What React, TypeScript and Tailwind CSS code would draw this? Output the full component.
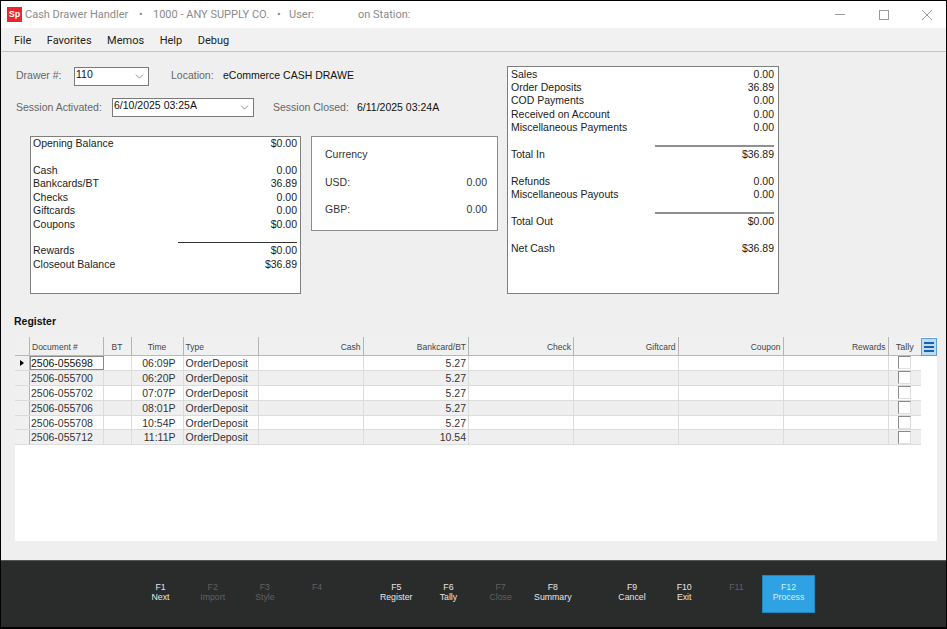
import { ChevronDown } from 'lucide-react'

const DRAWER_ROWS = [
  { label: 'Opening Balance', value: '$0.00' },
  {},
  { label: 'Cash', value: '0.00' },
  { label: 'Bankcards/BT', value: '36.89' },
  { label: 'Checks', value: '0.00' },
  { label: 'Giftcards', value: '0.00' },
  { label: 'Coupons', value: '$0.00' },
  { rule: true },
  { label: 'Rewards', value: '$0.00' },
  { label: 'Closeout Balance', value: '$36.89' },
]

const TOTAL_ROWS = [
  { label: 'Sales', value: '0.00' },
  { label: 'Order Deposits', value: '36.89' },
  { label: 'COD Payments', value: '0.00' },
  { label: 'Received on Account', value: '0.00' },
  { label: 'Miscellaneous Payments', value: '0.00' },
  { rule: true },
  { label: 'Total In', value: '$36.89' },
  {},
  { label: 'Refunds', value: '0.00' },
  { label: 'Miscellaneous Payouts', value: '0.00' },
  { rule: true },
  { label: 'Total Out', value: '$0.00' },
  {},
  { label: 'Net Cash', value: '$36.89' },
]

const COLUMNS = [
  { name: 'Document #', width: 'w-[73.5px]', head: 'text-left', cell: 'text-left pl-[1px]' },
  { name: 'BT', width: 'w-[28px]', head: 'text-center', cell: 'text-left' },
  { name: 'Time', width: 'w-[52px]', head: 'text-center', cell: 'text-right pr-[7px]' },
  { name: 'Type', width: 'w-[75px]', head: 'text-left', cell: 'text-left pl-[2px]' },
  { name: 'Cash', width: 'w-[105px]', head: 'text-right', cell: 'text-right' },
  { name: 'Bankcard/BT', width: 'w-[105.5px]', head: 'text-right', cell: 'text-right pr-[2px]' },
  { name: 'Check', width: 'w-[105px]', head: 'text-right', cell: 'text-right' },
  { name: 'Giftcard', width: 'w-[104.5px]', head: 'text-right', cell: 'text-right' },
  { name: 'Coupon', width: 'w-[105px]', head: 'text-right', cell: 'text-right' },
  { name: 'Rewards', width: 'w-[105px]', head: 'text-right', cell: 'text-right' },
]

const REGISTER = [
  ['2506-055698', '', '06:09P', 'OrderDeposit', '', '5.27'],
  ['2506-055700', '', '06:20P', 'OrderDeposit', '', '5.27'],
  ['2506-055702', '', '07:07P', 'OrderDeposit', '', '5.27'],
  ['2506-055706', '', '08:01P', 'OrderDeposit', '', '5.27'],
  ['2506-055708', '', '10:54P', 'OrderDeposit', '', '5.27'],
  ['2506-055712', '', '11:11P', 'OrderDeposit', '', '10.54'],
]

type FKey = { key: string; label: string; off?: boolean; primary?: boolean }

const KEY_GROUPS: FKey[][] = [
  [
    { key: 'F1', label: 'Next' },
    { key: 'F2', label: 'Import', off: true },
    { key: 'F3', label: 'Style', off: true },
    { key: 'F4', label: '', off: true },
  ],
  [
    { key: 'F5', label: 'Register' },
    { key: 'F6', label: 'Tally' },
    { key: 'F7', label: 'Close', off: true },
    { key: 'F8', label: 'Summary' },
  ],
  [
    { key: 'F9', label: 'Cancel' },
    { key: 'F10', label: 'Exit' },
    { key: 'F11', label: '', off: true },
    { key: 'F12', label: 'Process', primary: true },
  ],
]

type Row = { label?: string; value?: string; rule?: boolean }

function SummaryRows({ rows, ruleClass }: { rows: Row[]; ruleClass: string }) {
  return (
    <>
      {rows.map((row, i) =>
        row.rule ? (
          <div key={i} className="h-[13.4px] flex items-end justify-end pb-[1px]">
            <div className={ruleClass} />
          </div>
        ) : (
          <div key={i} className="h-[13.4px] flex items-center justify-between leading-[13px]">
            <span>{row.label}</span>
            <span>{row.value}</span>
          </div>
        ),
      )}
    </>
  )
}

function Combo({ value, className }: { value: string; className: string }) {
  return (
    <div className={'h-[19px] bg-white border border-[#7a7a7a] flex items-center justify-between pl-[1px] pr-[2px] text-[10.5px] text-[#111] ' + className}>
      <span className="-mt-[3px]">{value}</span>
      <ChevronDown size={13} strokeWidth={1.2} className="text-[#555]" />
    </div>
  )
}

function FunctionKey({ fkey, label, off, primary }: { fkey: string; label: string; off?: boolean; primary?: boolean }) {
  return (
    <div
      className={
        'w-[52.2px] h-[38px] flex flex-col items-center justify-center pb-[4px] text-[8.75px] leading-[10px] ' +
        (primary ? 'bg-[#2ea2e3] border border-[#1f86c4] text-[#d8eefb] ' : '') +
        (off ? 'text-[#5f6161]' : primary ? '' : 'text-[#e6e6e6]')
      }
    >
      <span>{fkey}</span>
      <span className={label ? '' : 'h-[10px]'}>{label}</span>
    </div>
  )
}

export default function App() {
  return (
    <div className="w-[947px] h-[629px] flex flex-col bg-black pt-[1px] pl-[1px] pr-[1px] pb-[2px] overflow-hidden font-['Liberation_Sans',sans-serif]">
      {/* Title bar */}
      <div className="h-[27px] bg-white flex items-center pl-[6px] pr-[14px] pt-[1px] shrink-0 text-[11px] text-[#8a8a8a] font-['Roboto',sans-serif]">
        <div className="w-[15px] h-[15px] -mt-[1px] bg-[#e8262d] text-white text-[9px] font-bold flex items-center justify-center mr-[3px] font-['Liberation_Sans',sans-serif]">
          Sp
        </div>
        <span className="w-[105px] whitespace-nowrap">Cash Drawer Handler</span>
        <span className="ml-[9px] w-[14px]">•</span>
        <span className="w-[115px] whitespace-nowrap">1000 - ANY SUPPLY CO.</span>
        <span className="ml-[9px] w-[12px]">•</span>
        <span className="w-[68px]">User:</span>
        <span className="ml-[1px] whitespace-nowrap">on Station:</span>
        <div className="ml-auto -mt-[1px] flex items-center gap-[33.5px] text-[#9a9a9a]">
          <svg width="10" height="10" viewBox="0 0 10 10" fill="none" stroke="currentColor">
            <path d="M0 4.5h10" />
          </svg>
          <svg width="10" height="10" viewBox="0 0 10 10" fill="none" stroke="currentColor">
            <rect x="0.5" y="0.5" width="9" height="9" />
          </svg>
          <svg width="10" height="10" viewBox="0 0 10 10" fill="none" stroke="currentColor">
            <path d="M0 0l10 10M10 0L0 10" />
          </svg>
        </div>
      </div>

      {/* Menu */}
      <div className="h-[20px] bg-[#f1f1f1] border-b border-[#c4c4c4] box-content flex items-center gap-[15.5px] pl-[13px] pt-[3px] shrink-0 text-[11px] text-[#222] font-['Roboto',sans-serif]">
        <span>File</span>
        <span>Favorites</span>
        <span>Memos</span>
        <span>Help</span>
        <span>Debug</span>
      </div>

      {/* Body */}
      <div className="flex-1 flex flex-col min-h-0 bg-[#efefef] text-[10.5px]">
        <div className="flex h-[256px] pt-[14px] shrink-0">
          <div className="w-[506px] shrink-0">
            <div className="flex items-center h-[19px] mt-[1px] pl-[15px] text-[#666]">
              <span className="w-[58px] -mt-[1px]">Drawer #:</span>
              <Combo value="110" className="w-[75px]" />
              <span className="ml-[22px] w-[52px] -mt-[1px]">Location:</span>
              <span className="text-[#111] whitespace-nowrap -mt-[1px]">eCommerce CASH DRAWE</span>
            </div>
            <div className="flex items-center h-[19px] mt-[12px] pl-[15px] text-[#666]">
              <span className="w-[96px]">Session Activated:</span>
              <Combo value="6/10/2025 03:25A" className="w-[142px]" />
              <span className="ml-[19px] w-[84px]">Session Closed:</span>
              <span className="text-[#111] whitespace-nowrap">6/11/2025 03:24A</span>
            </div>
            <div className="flex items-start gap-[10px] mt-[19px] ml-[29px]">
              <div className="w-[271px] h-[158px] bg-white border border-[#7f7f7f] pl-[2px] pr-[3px] text-[#222]">
                <SummaryRows rows={DRAWER_ROWS} ruleClass="w-[119px] h-[1px] bg-[#333]" />
              </div>
              <div className="w-[187px] h-[95px] bg-white border border-[#8c8c8c] pl-[13px] pr-[10px] text-[#333]">
                <div className="mt-[11px] h-[13px] leading-[13px]">Currency</div>
                <div className="mt-[15px] h-[13px] leading-[13px] flex justify-between">
                  <span>USD:</span>
                  <span>0.00</span>
                </div>
                <div className="mt-[14px] h-[13px] leading-[13px] flex justify-between">
                  <span>GBP:</span>
                  <span>0.00</span>
                </div>
              </div>
            </div>
          </div>
          <div className="w-[272px] h-[228px] bg-white border border-[#7f7f7f] pt-[0.4px] pl-[3px] pr-[4px] text-[#222]">
            <SummaryRows rows={TOTAL_ROWS} ruleClass="w-[119px] h-[2px] bg-[#8f8f8f]" />
          </div>
        </div>

        {/* Register */}
        <div className="pl-[13px] mt-[7px] h-[13px] leading-[13px] font-bold text-[#111] shrink-0">Register</div>
        <div className="mt-[9px] ml-[14px] w-[922px] h-[204px] bg-white shrink-0 flex items-start relative">
          <div className="w-[906px]">
            <div className="flex h-[19px] bg-[#f0f0f0] border-b border-[#b8b8b8] text-[8.5px] text-[#444]">
              <div className="w-[15px] border-r border-[#b5b5b5]" />
              {COLUMNS.map((col) => (
                <div key={col.name} className={'px-[2px] pt-[4px] border-r border-[#b5b5b5] whitespace-nowrap ' + col.width + ' ' + col.head}>
                  {col.name}
                </div>
              ))}
              <div className="flex-1 text-center pt-[4px] text-[9px]">Tally</div>
            </div>
            {REGISTER.map((row, r) => (
              <div key={row[0]} className={'flex h-[14.9px] border-b border-[#dcdcdc] text-[10.5px] leading-[14px] text-[#333] ' + (r % 2 ? 'bg-[#efefef]' : 'bg-white')}>
                <div className="w-[15px] bg-[#f0f0f0] border-r border-[#b5b5b5] flex items-center justify-center">
                  {r === 0 && <div className="w-0 h-0 border-y-[3.5px] border-y-transparent border-l-[4px] border-l-black" />}
                </div>
                {COLUMNS.map((col, c) => (
                  <div
                    key={col.name}
                    className={
                      'border-r border-[#dcdcdc] whitespace-nowrap ' + col.width + ' ' + col.cell +
                      (r === 0 && c === 0 ? ' outline outline-1 -outline-offset-1 outline-[#8a8a8a] text-[#111]' : '')
                    }
                  >
                    {row[c]}
                  </div>
                ))}
                <div className="flex-1 flex justify-center items-center">
                  <div className="w-[13px] h-[13px] bg-white border-t border-l border-[#8a8a8a] border-r border-b border-r-[#dfdfdf] border-b-[#dfdfdf]" />
                </div>
              </div>
            ))}
          </div>
          <div className="w-[16px] h-[18px] mt-[1px] bg-[#bcdcf5] border border-[#5f9fd8] flex flex-col items-center justify-center gap-[2px]">
            <div className="w-[10px] h-[2px] bg-[#1f5fa8]" />
            <div className="w-[10px] h-[2px] bg-[#1f5fa8]" />
            <div className="w-[10px] h-[2px] bg-[#1f5fa8]" />
          </div>
        </div>
      </div>

      {/* Function keys */}
      <div className="h-[67px] shrink-0 bg-[#2a2b2b] border-t border-[#555] flex items-start gap-[27px] pl-[133.4px] pt-[14px]">
        {KEY_GROUPS.map((group, g) => (
          <div key={g} className="flex">
            {group.map((k) => (
              <FunctionKey key={k.key} fkey={k.key} label={k.label} off={k.off} primary={k.primary} />
            ))}
          </div>
        ))}
      </div>
    </div>
  )
}
